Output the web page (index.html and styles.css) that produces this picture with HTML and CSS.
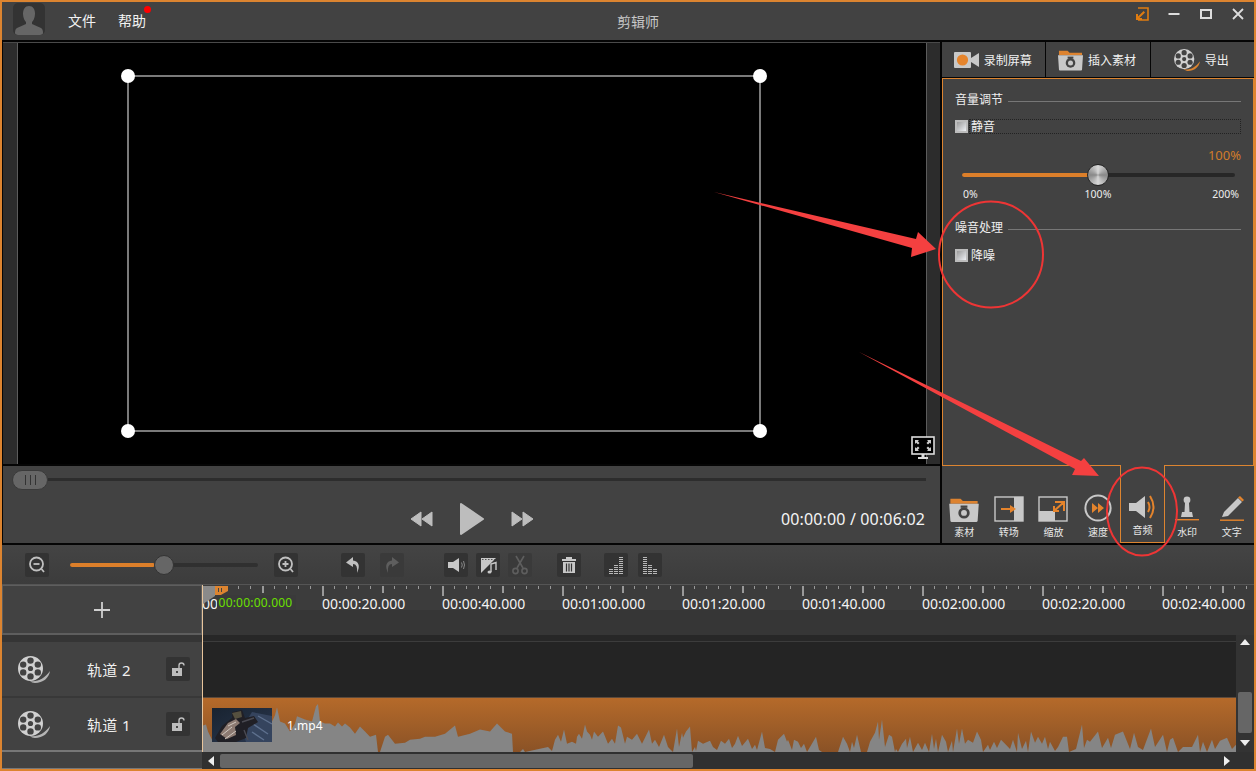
FILE: index.html
```html
<!DOCTYPE html>
<html lang="zh">
<head>
<meta charset="utf-8">
<title>剪辑师</title>
<link rel="stylesheet" href="styles.css">
</head>
<body>
<svg class="defs" width="0" height="0">
  <defs>
    <symbol id="reel" viewBox="0 0 32 28">
      <path d="M12 26 C20 27 26 24 32 16 C31 23 25 28 17 28 C15 28 13 27 12 26Z" fill="currentColor"/>
      <circle cx="12.5" cy="13.5" r="12.5" fill="#d0d0d0"/>
      <g fill="#424242">
        <circle cx="12.5" cy="13.5" r="2.6"/>
        <circle cx="12.5" cy="5.6" r="3.2"/>
        <circle cx="12.5" cy="21.4" r="3.2"/>
        <circle cx="5.2" cy="9.6" r="3.2"/>
        <circle cx="19.8" cy="9.6" r="3.2"/>
        <circle cx="5.2" cy="17.4" r="3.2"/>
        <circle cx="19.8" cy="17.4" r="3.2"/>
      </g>
    </symbol>
    <symbol id="folder" viewBox="0 0 26 22">
      <path d="M1 1.5 H10 L12 3.5 H25 V6 H1Z" fill="#dd8330"/>
      <path d="M0 6 H26 L25 21 Q25 22 24 22 H2 Q1 22 1 21Z" fill="#c8c8c8"/>
      <circle cx="13" cy="14" r="5" fill="#444"/>
      <circle cx="13" cy="14" r="2.6" fill="#c8c8c8"/>
      <rect x="10" y="7.5" width="6" height="2" fill="#444"/>
    </symbol>
    <symbol id="lock" viewBox="0 0 24 24">
      <rect x="6" y="11" width="10" height="8" fill="#bdbdbd"/>
      <rect x="10" y="14" width="2" height="2" fill="#444"/>
      <path d="M13 11 V8.5 Q13 6 15.5 6 Q18 6 18 8.5" fill="none" stroke="#bdbdbd" stroke-width="1.4"/>
    </symbol>
    <linearGradient id="thumb-sky" x1="0" y1="0" x2="1" y2="1">
      <stop offset="0" stop-color="#182330"/>
      <stop offset="1" stop-color="#2b3850"/>
    </linearGradient>
  </defs>
</svg>

<div class="app">
  <header class="titlebar">
    <div class="title-left">
      <div class="avatar">
        <svg viewBox="0 0 32 32" width="32" height="32"><path d="M16 3 C20 3 22 6 22 11 C22 15 20 18 19 19 V21 L28 25 Q30 26 30 30 Q30 32 28 32 H4 Q2 32 2 30 Q2 26 4 25 L13 21 V19 C12 18 10 15 10 11 C10 6 12 3 16 3Z" fill="#666"/></svg>
      </div>
      <nav class="menu">
        <span class="menu-item">文件</span>
        <span class="menu-item has-dot">帮助<i class="red-dot"></i></span>
      </nav>
    </div>
    <div class="app-title">剪辑师</div>
    <div class="win-controls">
      <svg class="win-btn" viewBox="0 0 14 14" width="14" height="14"><path d="M3 1 H13 V13 H3" fill="none" stroke="#e07c10" stroke-width="1.6"/><path d="M1 13 H7 V11 H4.4 L10 5.4 L8.6 4 L3 9.6 V7 H1Z" fill="#e07c10"/></svg>
      <svg class="win-btn" viewBox="0 0 14 14" width="14" height="14"><rect x="1.5" y="6" width="11" height="2" fill="#ddd"/></svg>
      <svg class="win-btn" viewBox="0 0 14 14" width="14" height="14"><rect x="2" y="3" width="10" height="8" fill="none" stroke="#ddd" stroke-width="2"/></svg>
      <svg class="win-btn" viewBox="0 0 14 14" width="14" height="14"><path d="M2 2 L12 12 M12 2 L2 12" stroke="#ddd" stroke-width="1.8"/></svg>
    </div>
  </header>

  <main class="main">
    <section class="left-col">
      <div class="canvas">
        <div class="strip strip-l"></div>
        <div class="stage">
          <div class="selection">
            <i class="handle h-tl"></i><i class="handle h-tr"></i><i class="handle h-bl"></i><i class="handle h-br"></i>
          </div>
        </div>
        <div class="strip strip-r"></div>
        <svg class="fullscreen" viewBox="0 0 24 24" width="24" height="24">
          <rect x="1" y="1" width="22" height="17" fill="#000" stroke="#ddd" stroke-width="1.6"/>
          <path d="M4 4 H8 L6.8 5.2 L8.5 7 L7 8.5 L5.2 6.8 L4 8Z M20 4 V8 L18.8 6.8 L17 8.5 L15.5 7 L17.2 5.2 L16 4Z M4 15 V11 L5.2 12.2 L7 10.5 L8.5 12 L6.8 13.8 L8 15Z M20 15 H16 L17.2 13.8 L15.5 12 L17 10.5 L18.8 12.2 L20 11Z" fill="#ccc"/>
          <rect x="10.5" y="18" width="3" height="3" fill="#ddd"/><rect x="7" y="21" width="10" height="2" fill="#ddd"/>
        </svg>
      </div>
      <div class="controls">
        <div class="seek">
          <div class="seek-thumb"><i></i><i></i><i></i></div>
          <div class="seek-track"></div>
        </div>
        <div class="transport">
          <span></span>
          <div class="transport-btns">
            <svg viewBox="0 0 24 18" width="24" height="18"><path d="M12 2 V16 L2 9Z M23 2 V16 L13 9Z" fill="#bdbdbd" stroke="#bdbdbd" stroke-linejoin="round"/></svg>
            <svg viewBox="0 0 26 34" width="26" height="34"><path d="M2 2 L24 17 L2 32Z" fill="#bdbdbd" stroke="#bdbdbd" stroke-width="2" stroke-linejoin="round"/></svg>
            <svg viewBox="0 0 24 18" width="24" height="18"><path d="M1 2 V16 L11 9Z M12 2 V16 L22 9Z" fill="#bdbdbd" stroke="#bdbdbd" stroke-linejoin="round"/></svg>
          </div>
          <div class="time">00:00:00 / 00:06:02</div>
        </div>
      </div>
    </section>

    <aside class="right-col">
      <div class="tabs">
        <div class="tab">
          <svg viewBox="0 0 25 18" width="25" height="18"><rect x="0" y="1" width="17" height="16" rx="1" fill="#c8c8c8"/><circle cx="8.5" cy="9" r="5.6" fill="#e5842c"/><path d="M17 7 L25 2 V16 L17 11Z" fill="#c8c8c8"/></svg>
          <span>录制屏幕</span>
        </div>
        <div class="tab">
          <svg width="25" height="22"><use href="#folder"/></svg>
          <span>插入素材</span>
        </div>
        <div class="tab">
          <svg class="reel-orange" width="26" height="23"><use href="#reel"/></svg>
          <span>导出</span>
        </div>
      </div>

      <div class="panel">
        <div class="heading"><span>音量调节</span><i class="rule"></i></div>
        <label class="check-row check-dashed"><i class="check"></i><span>静音</span></label>
        <div class="percent">100%</div>
        <div class="volume">
          <div class="volume-track"><div class="volume-fill"></div></div>
          <div class="volume-thumb"></div>
        </div>
        <div class="volume-labels"><span>0%</span><span>100%</span><span>200%</span></div>
        <div class="heading heading-2"><span>噪音处理</span><i class="rule"></i></div>
        <label class="check-row check-plain"><i class="check"></i><span>降噪</span></label>
      </div>

      <div class="tools">
        <div class="tool">
          <svg width="30" height="25"><use href="#folder"/></svg>
          <span>素材</span>
        </div>
        <div class="tool">
          <svg viewBox="0 0 30 26" width="30" height="26"><rect x="1" y="1" width="28" height="24" fill="#424242" stroke="#c8c8c8" stroke-width="1.4"/><rect x="20" y="1" width="9" height="24" fill="#c8c8c8"/><path d="M7 12 H16 V9 L22 13 L16 17 V14 H7Z" fill="#e5842c"/></svg>
          <span>转场</span>
        </div>
        <div class="tool">
          <svg viewBox="0 0 30 26" width="30" height="26"><rect x="1" y="1" width="28" height="24" fill="#424242" stroke="#c8c8c8" stroke-width="1.4"/><rect x="1" y="15" width="16" height="10" fill="#c8c8c8"/><path d="M17 6 H26 V15 M26 6 L16 15 M16 10 V15 H21" fill="none" stroke="#e5842c" stroke-width="2"/></svg>
          <span>缩放</span>
        </div>
        <div class="tool">
          <svg viewBox="0 0 28 28" width="28" height="28"><circle cx="14" cy="14" r="12.6" fill="none" stroke="#c8c8c8" stroke-width="2"/><path d="M8 9 L14 14 L8 19Z M14 9 L20 14 L14 19Z" fill="#e5842c"/></svg>
          <span>速度</span>
        </div>
        <div class="tool tool-active">
          <svg viewBox="0 0 30 26" width="30" height="26"><path d="M1 9 H8 L17 2 V24 L8 17 H1Z" fill="#c8c8c8"/><path d="M20 8 Q23 13 20 18" fill="none" stroke="#e5842c" stroke-width="2"/><path d="M22 2 Q29 13 22 24" fill="none" stroke="#e5842c" stroke-width="2"/></svg>
          <span>音频</span>
        </div>
        <div class="tool">
          <svg viewBox="0 0 28 26" width="28" height="26"><circle cx="14" cy="4" r="3.4" fill="#c8c8c8"/><path d="M12 7 H16 L16.5 16 H19 L20 21 H8 L9 16 H11.5Z" fill="#c8c8c8"/><rect x="2" y="23" width="24" height="1.4" fill="#e5842c"/></svg>
          <span>水印</span>
        </div>
        <div class="tool">
          <svg viewBox="0 0 28 26" width="28" height="26"><path d="M20 2 L24 6 L10 20 L4 21 L6 16Z" fill="#c8c8c8"/><path d="M20 1.5 L22 0 L26 4 L24.4 5.6Z" fill="#e5842c"/><rect x="2" y="23.5" width="24" height="1.4" fill="#e5842c"/></svg>
          <span>文字</span>
        </div>
      </div>
    </aside>
  </main>

  <div class="toolbar">
    <div class="tbtn tb-first"><svg viewBox="0 0 24 24" width="24" height="24"><circle cx="11.5" cy="11" r="6.5" fill="none" stroke="#c0c0c0" stroke-width="1.8"/><path d="M8.5 11 H14.5" stroke="#c0c0c0" stroke-width="1.8"/><path d="M16.5 16 L19 19" stroke="#c0c0c0" stroke-width="1.8"/></svg></div>
    <div class="zoom-slider"><div class="zoom-fill"></div><div class="zoom-thumb"></div></div>
    <div class="tbtn tb-zoomin"><svg viewBox="0 0 24 24" width="24" height="24"><circle cx="11.5" cy="11" r="6.5" fill="none" stroke="#c0c0c0" stroke-width="1.8"/><path d="M8.5 11 H14.5 M11.5 8 V14" stroke="#c0c0c0" stroke-width="1.8"/><path d="M16.5 16 L19 19" stroke="#c0c0c0" stroke-width="1.8"/></svg></div>
    <div class="tbtn tb-undo"><svg viewBox="0 0 24 24" width="24" height="24"><path d="M12 4 L5 9.5 L12 14 V11 Q17 11 16 20 Q21 9 12 7.5Z" fill="#c0c0c0"/></svg></div>
    <div class="tbtn tb-redo tbtn-dim"><svg viewBox="0 0 24 24" width="24" height="24"><path d="M12 4 L19 9.5 L12 14 V11 Q7 11 8 20 Q3 9 12 7.5Z" fill="#5e5e5e"/></svg></div>
    <div class="tbtn tb-vol"><svg viewBox="0 0 24 24" width="24" height="24"><path d="M4 9 H9 L15 5 V19 L9 15 H4Z" fill="#c8c8c8"/><path d="M17.5 9.5 Q19 12 17.5 14.5 M19.5 8 Q21.5 12 19.5 16" fill="none" stroke="#888" stroke-width="1"/></svg></div>
    <div class="tbtn tb-near"><svg viewBox="0 0 24 24" width="24" height="24"><path d="M5 5 H20 L5 20Z" fill="#c8c8c8"/><path d="M6 6.5 H19" stroke="#555" stroke-dasharray="1.5 1.5"/><path d="M15 19 V11 L20 9.5 V17" fill="none" stroke="#c8c8c8" stroke-width="1.4"/><ellipse cx="13.5" cy="19" rx="2" ry="1.5" fill="#c8c8c8"/></svg></div>
    <div class="tbtn tb-near tbtn-dim"><svg viewBox="0 0 24 24" width="24" height="24"><path d="M8 3 L15 15 M16 3 L9 15" stroke="#5e5e5e" stroke-width="1.6"/><circle cx="7.5" cy="18" r="2.6" fill="none" stroke="#5e5e5e" stroke-width="1.6"/><circle cx="16.5" cy="18" r="2.6" fill="none" stroke="#5e5e5e" stroke-width="1.6"/></svg></div>
    <div class="tbtn tb-trash"><svg viewBox="0 0 24 24" width="24" height="24"><path d="M5 6 H19 V8 H5Z M9 6 V4 H15 V6" fill="#c8c8c8"/><path d="M6 9 H18 V20 H6Z" fill="#c8c8c8"/><path d="M9.5 10.5 V18.5 M12 10.5 V18.5 M14.5 10.5 V18.5" stroke="#333" stroke-width="1.2"/></svg></div>
    <div class="tbtn tb-bars"><svg viewBox="0 0 24 24" width="24" height="24"><path d="M5 20.5 H9 M5 18.5 H9 M5 16.5 H9 M10 20.5 H14 M10 18.5 H14 M10 16.5 H14 M10 14.5 H14 M10 12.5 H14 M15 20.5 H19 M15 18.5 H19 M15 16.5 H19 M15 14.5 H19 M15 12.5 H19 M15 10.5 H19 M15 8.5 H19 M15 6.5 H19 M15 4.5 H19" stroke="#b8b8b8" stroke-width="1.2"/></svg></div>
    <div class="tbtn tb-bars2"><svg viewBox="0 0 24 24" width="24" height="24"><path d="M5 20.5 H9 M5 18.5 H9 M5 16.5 H9 M5 14.5 H9 M5 12.5 H9 M5 10.5 H9 M5 8.5 H9 M5 6.5 H9 M5 4.5 H9 M10 20.5 H14 M10 18.5 H14 M10 16.5 H14 M10 14.5 H14 M10 12.5 H14 M15 20.5 H19 M15 18.5 H19 M15 16.5 H19" stroke="#b8b8b8" stroke-width="1.2"/></svg></div>
  </div>

  <section class="timeline">
    <div class="track-col">
      <div class="add-cell">
        <svg viewBox="0 0 18 18" width="18" height="18"><path d="M9 1 V17 M1 9 H17" stroke="#d0d0d0" stroke-width="1.8"/></svg>
      </div>
      <div class="track-strip"></div>
      <div class="track-head track-head-2">
        <svg class="reel-gray" width="32" height="28"><use href="#reel"/></svg>
        <span class="track-name">轨道 2</span>
        <div class="tbtn"><svg width="24" height="24"><use href="#lock"/></svg></div>
      </div>
      <div class="track-head track-head-1">
        <svg class="reel-gray" width="32" height="28"><use href="#reel"/></svg>
        <span class="track-name">轨道 1</span>
        <div class="tbtn"><svg width="24" height="24"><use href="#lock"/></svg></div>
      </div>
      <div class="track-foot"></div>
    </div>

    <div class="lanes">
      <div class="ruler">
        <span>00:00:00.000</span><span>00:00:20.000</span><span>00:00:40.000</span><span>00:01:00.000</span><span>00:01:20.000</span><span>00:01:40.000</span><span>00:02:00.000</span><span>00:02:20.000</span><span>00:02:40.000</span>
      </div>
      <div class="ruler-under"></div>
      <div class="lanes-body">
        <div class="lanes-main">
          <div class="lane-gap"></div>
          <div class="lane-2"></div>
          <div class="lane-1">
            <svg class="wave" viewBox="202 -53 1034 53" preserveAspectRatio="none">
              <polygon fill="#858585" points="202,0 203,-26 206,-27 208,-20 212,-12 220,-14 235,-14 250,-16 265,-24 272,-30 275,-36 277,-44 280,-30 285,-28 290,-20 295,-28 297,-35 305,-32 312,-30 316,-45 318,-47 320,-30 325,-28 330,-28 335,-25 338,-29 342,-25 345,-28 350,-24 355,-18 360,-25 365,-20 370,-15 376,-17 378,0 380,0 385,-15 388,-17 395,-8 405,-9 410,-12 420,-13 425,-15 435,-15 445,-18 455,-26 458,-15 470,-18 480,-22 490,-20 497,-28 505,-20 512,-18 513,0 520,0 523,-3 525,0 548,-5 552,-1 555,-12 558,-17 561,-10 564,-22 567,-8 572,-10 576,-8 577,-15 579,-18 582,-13 585,-27 587,-20 590,-17 592,-12 594,-20 598,-15 603,-20 608,-8 612,-13 615,-8 618,-26 621,-24 625,-8 627,-15 632,-12 637,-18 642,-8 644,-12 649,-22 652,-8 655,-12 659,-5 664,-17 668,-5 673,0 677,-23 679,-5 682,-19 683,-14 686,-20 690,-25 692,0 695,-5 696,-1 698,-11 703,-8 710,-11 713,-5 717,-2 721,-11 725,-8 729,-13 732,-4 735,-8 738,-16 742,-6 748,-13 752,-3 755,-7 757,-2 762,-20 765,-4 770,-3 775,0 778,-12 784,-18 787,-10 788,-12 792,-2 794,-12 798,-10 801,-4 804,-8 807,0 810,-5 816,-15 819,-2 822,0 838,0 843,-15 847,-8 850,0 852,-10 854,-4 857,-17 861,0 867,0 870,-10 875,-19 878,-30 879,-12 882,-32 885,-5 889,-17 892,-15 895,0 896,-3 898,0 902,-8 906,-13 907,-4 910,-15 913,0 918,-9 922,-2 925,-9 929,0 932,-18 934,-3 936,-13 938,0 942,-17 946,-10 948,0 952,-11 953,0 957,-23 959,-8 962,-23 965,-8 968,-12 973,-9 977,-20 981,-12 983,0 988,-7 990,-2 994,-10 997,-4 1001,-12 1005,-8 1010,-3 1013,-12 1017,0 1018,-19 1022,-3 1026,-11 1028,0 1031,-20 1035,-9 1038,-15 1042,-8 1045,-15 1048,-3 1050,-10 1055,-1 1058,-5 1063,-15 1067,-15 1069,0 1076,-3 1082,-27 1084,-4 1087,-12 1090,-10 1098,-20 1102,-4 1108,-14 1111,-4 1115,-17 1123,-20 1130,-3 1134,-19 1138,-5 1143,-2 1151,-23 1155,-5 1163,-17 1167,0 1170,-12 1173,-14 1178,0 1183,-5 1192,-5 1198,-17 1200,0 1203,-10 1207,0 1212,-12 1215,-3 1220,-11 1227,-14 1232,-3 1236,-7 1236,0"/>
            </svg>
            <svg class="thumb" viewBox="0 0 60 34" width="60" height="34">
              <rect width="60" height="34" fill="url(#thumb-sky)"/>
              <path d="M40 4 L60 8 V34 H34 L30 20Z" fill="#35445e"/>
              <path d="M38 14 L56 26 M40 24 L52 32 M46 8 L60 16" stroke="#5e708e" stroke-width="1.4"/>
              <path d="M3 30 L10 18 L20 10 L20 4 L30 2 L33 10 L42 8 L46 14 L36 20 L34 30 L24 34 H6Z" fill="#201f25"/>
              <path d="M8 26 L16 15 L24 11 L28 15 L23 19 L24 27 L15 31Z" fill="#8c7a72"/>
              <path d="M20 5 L29 3 L30 9 L23 11Z" fill="#55503f"/>
              <path d="M10 27 L20 19 M13 31 L24 23 M16 18 L24 14" stroke="#d0c8c0" stroke-width="1"/>
              <path d="M30 14 L42 10 M32 22 L36 32" stroke="#4a4a52" stroke-width="1.4"/>
            </svg>
            <span class="clip-name">1.mp4</span>
          </div>
        </div>
        <div class="vscroll">
          <svg viewBox="0 0 10 6" width="10" height="6"><path d="M0 6 L5 0 L10 6Z" fill="#eee"/></svg>
          <div class="vscroll-thumb"></div>
          <svg viewBox="0 0 10 6" width="10" height="6"><path d="M0 0 L5 6 L10 0Z" fill="#eee"/></svg>
        </div>
      </div>
      <div class="hscroll">
        <svg viewBox="0 0 6 10" width="6" height="10"><path d="M6 0 L0 5 L6 10Z" fill="#eee"/></svg>
        <div class="hscroll-thumb"></div>
        <svg class="hscroll-end" viewBox="0 0 6 10" width="6" height="10"><path d="M0 0 L6 5 L0 10Z" fill="#eee"/></svg>
      </div>
      <div class="playhead-line"></div>
      <div class="playhead-gray"></div>
      <div class="playhead-tab"><i></i><i></i></div>
      <div class="timecode">00:00:00.000</div>
    </div>
  </section>
</div>

<svg class="annotations" viewBox="0 0 1256 771" width="1256" height="771">
  <polygon points="714,192 916,239 918,232 936,249 911,257 912,248" fill="#f44040"/>
  <polygon points="859,352 1081,461 1084,458 1099,476 1072,475 1075,469" fill="#f44040"/>
  <ellipse cx="991" cy="254.5" rx="52" ry="53" fill="none" stroke="#ee3535" stroke-width="2"/>
  <ellipse cx="1142" cy="511.5" rx="35" ry="44" fill="none" stroke="#ee3535" stroke-width="2"/>
</svg>
</body>
</html>
```
FILE: styles.css
```css
* { box-sizing: border-box; }
html, body { margin: 0; padding: 0; }
body {
  width: 1256px;
  height: 771px;
  overflow: hidden;
  position: relative;
  background: #424242;
  color: #f0f0f0;
  font-family: "Noto Sans", "Noto Sans CJK SC", sans-serif;
  font-size: 12px;
}
.defs { position: absolute; }
i { display: block; }
svg { display: block; flex: none; }

.app {
  width: 1256px;
  height: 771px;
  border: 2px solid #dc8430;
  display: flex;
  flex-direction: column;
  background: #424242;
}

/* title bar */
.titlebar {
  height: 38px;
  flex: none;
  display: flex;
  align-items: flex-start;
}
.title-left { width: 614px; display: flex; padding: 1px 0 0 11px; }
.avatar { width: 32px; height: 32px; background: #333; border-radius: 5px; overflow: hidden; }
.menu { display: flex; gap: 22px; margin: 8px 0 0 23px; font-size: 14px; line-height: 20px; }
.menu-item { color: #f2f2f2; }
.has-dot { position: relative; }
.red-dot {
  position: absolute;
  width: 7px;
  height: 7px;
  border-radius: 50%;
  background: #f00;
  right: -5px;
  top: -5px;
}
.app-title { width: 44px; text-align: center; font-size: 14px; line-height: 20px; margin-top: 10px; color: #c8c8c8; }
.win-controls { margin-left: auto; display: flex; gap: 18px; padding: 5px 9px 0 0; }

/* main */
.main {
  height: 505px;
  flex: none;
  display: flex;
  gap: 2px;
  background: #050505;
  padding: 2px 0 2px 1px;
}
.left-col { width: 937px; display: flex; flex-direction: column; gap: 2px; }
.canvas { height: 422px; display: flex; position: relative; border-top: 1px solid #4a4a4a; }
.strip { background: #2c2c2c; }
.strip-l { width: 15px; border-right: 1px solid #5c5c5c; }
.strip-r { width: 14px; border-left: 1px solid #5c5c5c; }
.stage { flex: 1; background: #000; position: relative; }
.selection {
  position: absolute;
  left: 109px;
  top: 32px;
  width: 634px;
  height: 357px;
  border: 2px solid #7a7a7a;
}
.handle { position: absolute; width: 14px; height: 14px; border-radius: 50%; background: #fff; }
.h-tl { left: -8px; top: -8px; }
.h-tr { right: -8px; top: -8px; }
.h-bl { left: -8px; bottom: -8px; }
.h-br { right: -8px; bottom: -8px; }
.fullscreen { position: absolute; right: 5px; bottom: 4px; }

.controls { flex: 1; background: #424242; display: flex; flex-direction: column; }
.seek { height: 27px; display: flex; align-items: center; padding: 0 14px 0 9px; }
.seek-thumb {
  width: 36px;
  height: 20px;
  border-radius: 10px;
  background: #666;
  border: 1px solid #3a3a3a;
  display: flex;
  justify-content: center;
  align-items: center;
  gap: 4px;
  flex: none;
}
.seek-thumb i { width: 1px; height: 10px; background: #333; }
.seek-track { flex: 1; height: 3px; background: #2d2d2d; }
.transport { flex: 1; display: grid; grid-template-columns: 1fr auto 1fr; align-items: center; padding-top: 2px; }
.transport-btns { display: flex; align-items: center; gap: 26px; }
.time { justify-self: end; padding-right: 15px; font-size: 16px; line-height: 22px; letter-spacing: .15px; color: #f4f4f4; }

/* right column */
.right-col { flex: 1; display: flex; flex-direction: column; }
.tabs { height: 35px; display: flex; gap: 1px; margin-bottom: 1px; flex: none; }
.tab {
  flex: 1;
  background: #424242;
  display: flex;
  align-items: center;
  justify-content: center;
  gap: 5px;
  padding-right: 2px;
  font-size: 12px;
}
.panel {
  height: 387px;
  flex: none;
  background: #424242;
  border: 1px solid #dc8430;
  border-bottom: 0;
  padding: 12px 12px 0 12px;
}
.heading { display: flex; align-items: center; gap: 5px; height: 18px; line-height: 18px; color: #eee; }
.rule { flex: 1; height: 1px; background: #777; margin-top: 3px; }
.check-row { display: flex; align-items: center; height: 15px; line-height: 15px; }
.check-dashed { margin-top: 10px; gap: 1px; }
.check-dashed span { flex: 1; border: 1px dotted #222; padding-left: 1px; height: 15px; line-height: 13px; }
.check {
  width: 13px;
  height: 13px;
  flex: none;
  border: 2px solid #bcbcbc;
  background: linear-gradient(135deg, #9a9a9a, #eef0f4);
}
.percent { margin-top: 13px; height: 17px; line-height: 16px; text-align: right; color: #d17c2a; font-size: 13px; }
.volume { height: 22px; margin: 0 6px 0 7px; position: relative; display: flex; align-items: center; }
.volume-track { width: 100%; height: 4px; border-radius: 2px; background: #272727; }
.volume-fill { width: 136px; height: 4px; border-radius: 2px; background: #dc7f2a; }
.volume-thumb {
  position: absolute;
  left: 125px;
  top: 0;
  width: 22px;
  height: 22px;
  border-radius: 50%;
  border: 1px solid #222;
  background: conic-gradient(#d8d8d8, #888, #d8d8d8, #888, #d8d8d8);
}
.volume-labels {
  display: flex;
  justify-content: space-between;
  margin-top: 2px;
  padding: 0 2px 0 8px;
  font-size: 10.5px;
  line-height: 13px;
  color: #eee;
}
.volume-labels span:nth-child(2) { margin-left: 6px; }
.heading-2 { margin-top: 18px; }
.check-plain { margin-top: 11px; gap: 3px; }

.tools {
  flex: 1;
  display: grid;
  grid-template-columns: repeat(7, 1fr);
  background: #424242;
}
.tool {
  border-top: 1px solid #dc8430;
  display: flex;
  flex-direction: column;
  align-items: center;
  justify-content: flex-end;
  gap: 3px;
  padding-bottom: 4px;
  font-size: 10px;
  line-height: 14px;
  color: #e8e8e8;
}
.tool-active {
  border-top: 0;
  border-left: 1px solid #dc8430;
  border-right: 1px solid #dc8430;
  border-bottom: 1px solid #dc8430;
  padding-bottom: 5px;
}

/* toolbar */
.toolbar {
  height: 40px;
  flex: none;
  display: flex;
  align-items: center;
  background: linear-gradient(#444, #3c3c3c);
  border-bottom: 1px solid #555;
}
.tbtn {
  width: 24px;
  height: 24px;
  flex: none;
  background: #333;
  border-radius: 2px;
}
.tbtn-dim { background: #3a3a3a; }
.tb-first { margin-left: 23px; }
.zoom-slider { width: 188px; height: 20px; margin-left: 21px; position: relative; }
.zoom-slider::before {
  content: "";
  position: absolute;
  left: 0;
  right: 0;
  top: 8px;
  height: 4px;
  border-radius: 2px;
  background: #303030;
}
.zoom-fill { position: absolute; left: 0; top: 8px; width: 85px; height: 4px; border-radius: 2px; background: #dc7f2a; }
.zoom-thumb {
  position: absolute;
  left: 84px;
  top: 0;
  width: 20px;
  height: 20px;
  border-radius: 50%;
  background: #666;
  border: 1px solid #333;
}
.tb-zoomin { margin-left: 16px; }
.tb-undo { margin-left: 43px; }
.tb-redo { margin-left: 15px; }
.tb-vol { margin-left: 40px; }
.tb-near { margin-left: 8px; }
.tb-trash { margin-left: 25px; }
.tb-bars { margin-left: 23px; }
.tb-bars2 { margin-left: 10px; }

/* timeline */
.timeline { flex: 1; display: flex; min-height: 0; }
.track-col { width: 200px; flex: none; display: flex; flex-direction: column; background: #424242; }
.add-cell {
  height: 50px;
  border: 1px solid #5e5e5e;
  border-bottom-width: 2px;
  display: flex;
  align-items: center;
  justify-content: center;
  flex: none;
}
.track-strip { height: 7px; background: #353535; flex: none; }
.track-head {
  display: flex;
  align-items: center;
  flex: none;
  padding: 0 12px 0 16px;
  color: #f0f0f0;
}
.track-head-2 { height: 56px; border-bottom: 2px solid #383838; }
.track-head-1 { height: 54px; border-bottom: 2px solid #777; }
.track-name { flex: 1; text-align: center; font-size: 15px; letter-spacing: .4px; padding-left: 2px; }
.reel-gray { color: #b4b4b4; }
.reel-orange { color: #dc8430; }
.track-foot { flex: 1; background: #424242; border-bottom: 1px solid #777; }

.lanes { flex: 1; display: flex; flex-direction: column; position: relative; min-width: 0; overflow: hidden; }
.ruler {
  height: 28px;
  flex: none;
  display: flex;
  background-image:
    linear-gradient(90deg, #999 2px, transparent 2px),
    linear-gradient(90deg, #999 2px, transparent 2px),
    linear-gradient(90deg, #999 1px, transparent 1px),
    linear-gradient(#3c3c3c 25px, #363636 25px);
  background-size: 120px 10px, 60px 7px, 12px 3px, 100% 100%;
  background-repeat: repeat-x, repeat-x, repeat-x, no-repeat;
  background-position: 0 1px, 0 1px, 0 1px, 0 0;
  overflow: hidden;
}
.ruler span {
  width: 120px;
  flex: none;
  font-size: 14px;
  line-height: 18px;
  padding-top: 10px;
  color: #f4f4f4;
  white-space: nowrap;
}
.ruler-under { height: 22px; flex: none; background: #363636; }
.lanes-body { height: 117px; flex: none; display: flex; }
.lanes-main { flex: 1; display: flex; flex-direction: column; min-width: 0; }
.lane-gap { height: 7px; background: #272727; border-bottom: 1px solid #3c3c3c; flex: none; }
.lane-2 { height: 55px; flex: none; background: #242424; }
.lane-1 {
  flex: 1;
  position: relative;
  background: linear-gradient(#b56a2a, #8a5226);
  border-top: 1px solid #5c4a3c;
}
.wave { position: absolute; inset: 0; width: 100%; height: 100%; }
.thumb { position: absolute; left: 10px; top: 10px; }
.clip-name { position: absolute; left: 85px; top: 20px; font-size: 12px; line-height: 16px; color: #fff; }
.vscroll {
  width: 18px;
  flex: none;
  background: #333;
  display: flex;
  flex-direction: column;
  align-items: center;
  padding-top: 4px;
}
.vscroll-thumb { width: 14px; height: 41px; border-radius: 2px; background: #666; margin: 47px 0 7px; }
.hscroll {
  flex: 1;
  background: #303030;
  display: flex;
  align-items: center;
  padding: 0 24px 0 6px;
}
.hscroll-thumb { width: 473px; height: 14px; margin-left: 6px; border-radius: 2px; background: #666; }
.hscroll-end { margin-left: auto; }
.playhead-line { position: absolute; left: 0; top: 0; width: 1px; height: 167px; background: #e8c59c; }
.playhead-gray {
  position: absolute;
  left: 1px;
  top: 1px;
  width: 12px;
  height: 18px;
  background: #8a8a8a;
  clip-path: polygon(0 0, 100% 0, 100% 55%, 0 100%);
}
.playhead-tab {
  position: absolute;
  left: 13px;
  top: 1px;
  width: 13px;
  height: 9px;
  background: #dc8430;
  clip-path: polygon(0 0, 100% 0, 100% 55%, 45% 100%, 0 100%);
  display: flex;
  gap: 2px;
  padding: 2px 0 0 3px;
}
.playhead-tab i { width: 1px; height: 4px; background: #444; }
.timecode {
  position: absolute;
  left: 15px;
  top: 10px;
  width: 79px;
  height: 15px;
  padding-right: 2px;
  background: #3a3a3a;
  color: #6ce000;
  font-size: 12px;
  line-height: 15px;
  letter-spacing: .2px;
  text-align: center;
}

/* annotation overlay */
.annotations { position: absolute; left: 0; top: 0; pointer-events: none; }
```
